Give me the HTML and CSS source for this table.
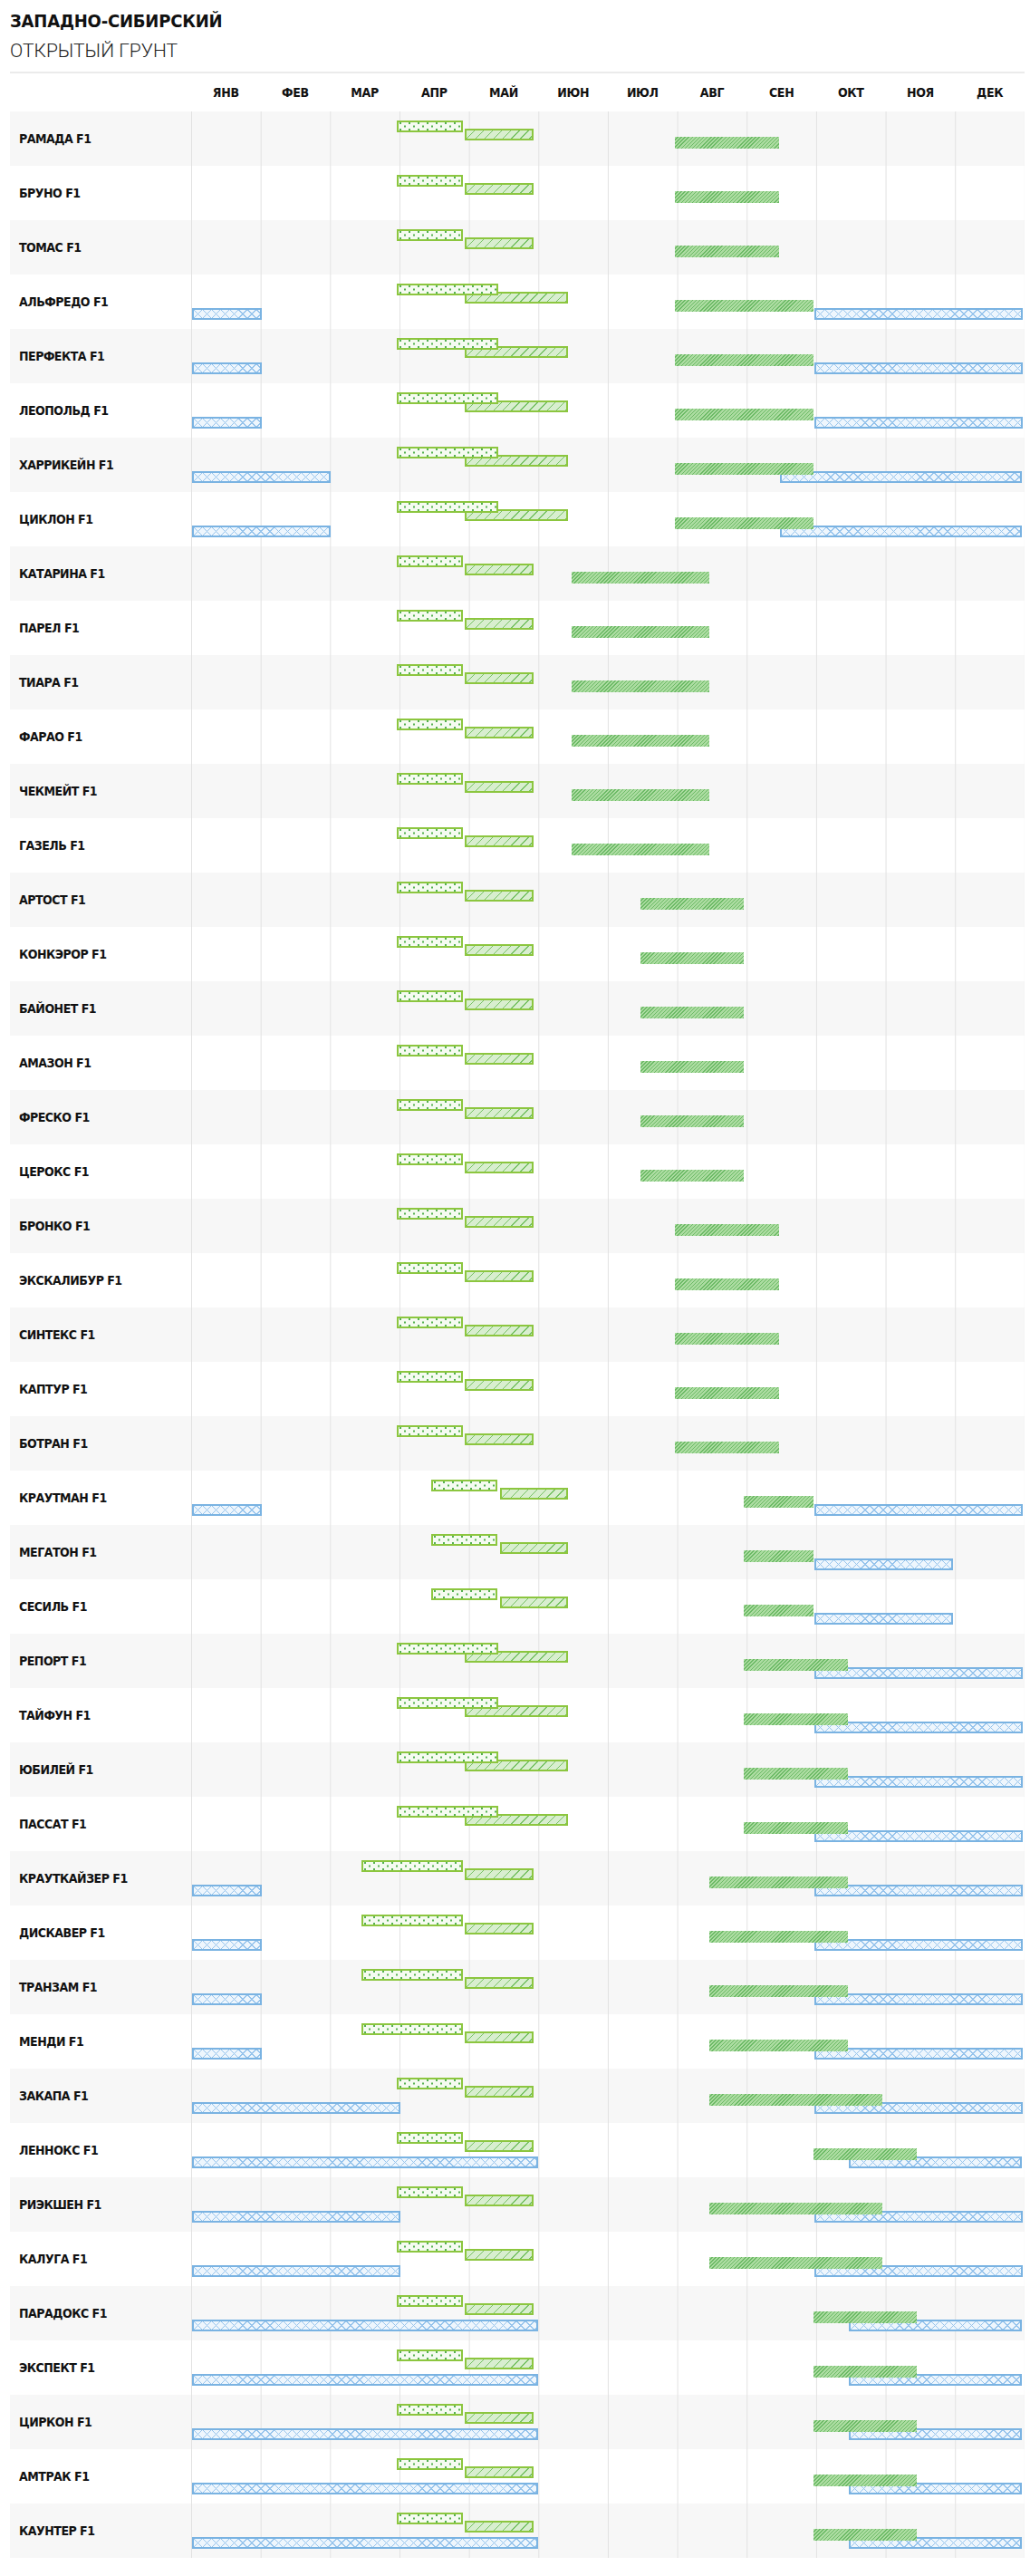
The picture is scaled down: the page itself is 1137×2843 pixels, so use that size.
FILE: index.html
```html
<!DOCTYPE html>
<html lang="ru">
<head>
<meta charset="utf-8">
<title>Западно-Сибирский — открытый грунт</title>
<link rel="stylesheet" href="styles.css">
</head>
<body>
<div class="page">
  <h1 class="title">ЗАПАДНО-СИБИРСКИЙ</h1>
  <h2 class="subtitle">ОТКРЫТЫЙ ГРУНТ</h2>
  <div class="chart">
    <div class="months">
      <div class="months-spacer"></div>
      <div class="month">ЯНВ</div><div class="month">ФЕВ</div><div class="month">МАР</div><div class="month">АПР</div>
      <div class="month">МАЙ</div><div class="month">ИЮН</div><div class="month">ИЮЛ</div><div class="month">АВГ</div>
      <div class="month">СЕН</div><div class="month">ОКТ</div><div class="month">НОЯ</div><div class="month">ДЕК</div>
    </div>

    <div class="row"><div class="name">РАМАДА F1</div><div class="track"><div class="bars"><i class="bar harv" style="--s:7;--e:8.5"></i><i class="bar hat" style="--s:4;--e:5"></i><i class="bar dot" style="--s:3;--e:4"></i></div></div></div>
    <div class="row"><div class="name">БРУНО F1</div><div class="track"><div class="bars"><i class="bar harv" style="--s:7;--e:8.5"></i><i class="bar hat" style="--s:4;--e:5"></i><i class="bar dot" style="--s:3;--e:4"></i></div></div></div>
    <div class="row"><div class="name">ТОМАС F1</div><div class="track"><div class="bars"><i class="bar harv" style="--s:7;--e:8.5"></i><i class="bar hat" style="--s:4;--e:5"></i><i class="bar dot" style="--s:3;--e:4"></i></div></div></div>
    <div class="row"><div class="name">АЛЬФРЕДО F1</div><div class="track"><div class="bars"><i class="bar blue" style="--s:0;--e:1"></i><i class="bar blue" style="--s:9;--e:12"></i><i class="bar harv" style="--s:7;--e:9"></i><i class="bar hat" style="--s:4;--e:5.5"></i><i class="bar dot" style="--s:3;--e:4.5"></i></div></div></div>
    <div class="row"><div class="name">ПЕРФЕКТА F1</div><div class="track"><div class="bars"><i class="bar blue" style="--s:0;--e:1"></i><i class="bar blue" style="--s:9;--e:12"></i><i class="bar harv" style="--s:7;--e:9"></i><i class="bar hat" style="--s:4;--e:5.5"></i><i class="bar dot" style="--s:3;--e:4.5"></i></div></div></div>
    <div class="row"><div class="name">ЛЕОПОЛЬД F1</div><div class="track"><div class="bars"><i class="bar blue" style="--s:0;--e:1"></i><i class="bar blue" style="--s:9;--e:12"></i><i class="bar harv" style="--s:7;--e:9"></i><i class="bar hat" style="--s:4;--e:5.5"></i><i class="bar dot" style="--s:3;--e:4.5"></i></div></div></div>
    <div class="row"><div class="name">ХАРРИКЕЙН F1</div><div class="track"><div class="bars"><i class="bar blue" style="--s:0;--e:2"></i><i class="bar blue" style="--s:8.5;--e:12"></i><i class="bar harv" style="--s:7;--e:9"></i><i class="bar hat" style="--s:4;--e:5.5"></i><i class="bar dot" style="--s:3;--e:4.5"></i></div></div></div>
    <div class="row"><div class="name">ЦИКЛОН F1</div><div class="track"><div class="bars"><i class="bar blue" style="--s:0;--e:2"></i><i class="bar blue" style="--s:8.5;--e:12"></i><i class="bar harv" style="--s:7;--e:9"></i><i class="bar hat" style="--s:4;--e:5.5"></i><i class="bar dot" style="--s:3;--e:4.5"></i></div></div></div>
    <div class="row"><div class="name">КАТАРИНА F1</div><div class="track"><div class="bars"><i class="bar harv" style="--s:5.5;--e:7.5"></i><i class="bar hat" style="--s:4;--e:5"></i><i class="bar dot" style="--s:3;--e:4"></i></div></div></div>
    <div class="row"><div class="name">ПАРЕЛ F1</div><div class="track"><div class="bars"><i class="bar harv" style="--s:5.5;--e:7.5"></i><i class="bar hat" style="--s:4;--e:5"></i><i class="bar dot" style="--s:3;--e:4"></i></div></div></div>
    <div class="row"><div class="name">ТИАРА F1</div><div class="track"><div class="bars"><i class="bar harv" style="--s:5.5;--e:7.5"></i><i class="bar hat" style="--s:4;--e:5"></i><i class="bar dot" style="--s:3;--e:4"></i></div></div></div>
    <div class="row"><div class="name">ФАРАО F1</div><div class="track"><div class="bars"><i class="bar harv" style="--s:5.5;--e:7.5"></i><i class="bar hat" style="--s:4;--e:5"></i><i class="bar dot" style="--s:3;--e:4"></i></div></div></div>
    <div class="row"><div class="name">ЧЕКМЕЙТ F1</div><div class="track"><div class="bars"><i class="bar harv" style="--s:5.5;--e:7.5"></i><i class="bar hat" style="--s:4;--e:5"></i><i class="bar dot" style="--s:3;--e:4"></i></div></div></div>
    <div class="row"><div class="name">ГАЗЕЛЬ F1</div><div class="track"><div class="bars"><i class="bar harv" style="--s:5.5;--e:7.5"></i><i class="bar hat" style="--s:4;--e:5"></i><i class="bar dot" style="--s:3;--e:4"></i></div></div></div>
    <div class="row"><div class="name">АРТОСТ F1</div><div class="track"><div class="bars"><i class="bar harv" style="--s:6.5;--e:8"></i><i class="bar hat" style="--s:4;--e:5"></i><i class="bar dot" style="--s:3;--e:4"></i></div></div></div>
    <div class="row"><div class="name">КОНКЭРОР F1</div><div class="track"><div class="bars"><i class="bar harv" style="--s:6.5;--e:8"></i><i class="bar hat" style="--s:4;--e:5"></i><i class="bar dot" style="--s:3;--e:4"></i></div></div></div>
    <div class="row"><div class="name">БАЙОНЕТ F1</div><div class="track"><div class="bars"><i class="bar harv" style="--s:6.5;--e:8"></i><i class="bar hat" style="--s:4;--e:5"></i><i class="bar dot" style="--s:3;--e:4"></i></div></div></div>
    <div class="row"><div class="name">АМАЗОН F1</div><div class="track"><div class="bars"><i class="bar harv" style="--s:6.5;--e:8"></i><i class="bar hat" style="--s:4;--e:5"></i><i class="bar dot" style="--s:3;--e:4"></i></div></div></div>
    <div class="row"><div class="name">ФРЕСКО F1</div><div class="track"><div class="bars"><i class="bar harv" style="--s:6.5;--e:8"></i><i class="bar hat" style="--s:4;--e:5"></i><i class="bar dot" style="--s:3;--e:4"></i></div></div></div>
    <div class="row"><div class="name">ЦЕРОКС F1</div><div class="track"><div class="bars"><i class="bar harv" style="--s:6.5;--e:8"></i><i class="bar hat" style="--s:4;--e:5"></i><i class="bar dot" style="--s:3;--e:4"></i></div></div></div>
    <div class="row"><div class="name">БРОНКО F1</div><div class="track"><div class="bars"><i class="bar harv" style="--s:7;--e:8.5"></i><i class="bar hat" style="--s:4;--e:5"></i><i class="bar dot" style="--s:3;--e:4"></i></div></div></div>
    <div class="row"><div class="name">ЭКСКАЛИБУР F1</div><div class="track"><div class="bars"><i class="bar harv" style="--s:7;--e:8.5"></i><i class="bar hat" style="--s:4;--e:5"></i><i class="bar dot" style="--s:3;--e:4"></i></div></div></div>
    <div class="row"><div class="name">СИНТЕКС F1</div><div class="track"><div class="bars"><i class="bar harv" style="--s:7;--e:8.5"></i><i class="bar hat" style="--s:4;--e:5"></i><i class="bar dot" style="--s:3;--e:4"></i></div></div></div>
    <div class="row"><div class="name">КАПТУР F1</div><div class="track"><div class="bars"><i class="bar harv" style="--s:7;--e:8.5"></i><i class="bar hat" style="--s:4;--e:5"></i><i class="bar dot" style="--s:3;--e:4"></i></div></div></div>
    <div class="row"><div class="name">БОТРАН F1</div><div class="track"><div class="bars"><i class="bar harv" style="--s:7;--e:8.5"></i><i class="bar hat" style="--s:4;--e:5"></i><i class="bar dot" style="--s:3;--e:4"></i></div></div></div>
    <div class="row"><div class="name">КРАУТМАН F1</div><div class="track"><div class="bars"><i class="bar blue" style="--s:0;--e:1"></i><i class="bar blue" style="--s:9;--e:12"></i><i class="bar harv" style="--s:8;--e:9"></i><i class="bar hat" style="--s:4.5;--e:5.5"></i><i class="bar dot" style="--s:3.5;--e:4.5"></i></div></div></div>
    <div class="row"><div class="name">МЕГАТОН F1</div><div class="track"><div class="bars"><i class="bar blue" style="--s:9;--e:11"></i><i class="bar harv" style="--s:8;--e:9"></i><i class="bar hat" style="--s:4.5;--e:5.5"></i><i class="bar dot" style="--s:3.5;--e:4.5"></i></div></div></div>
    <div class="row"><div class="name">СЕСИЛЬ F1</div><div class="track"><div class="bars"><i class="bar blue" style="--s:9;--e:11"></i><i class="bar harv" style="--s:8;--e:9"></i><i class="bar hat" style="--s:4.5;--e:5.5"></i><i class="bar dot" style="--s:3.5;--e:4.5"></i></div></div></div>
    <div class="row"><div class="name">РЕПОРТ F1</div><div class="track"><div class="bars"><i class="bar blue" style="--s:9;--e:12"></i><i class="bar harv" style="--s:8;--e:9.5"></i><i class="bar hat" style="--s:4;--e:5.5"></i><i class="bar dot" style="--s:3;--e:4.5"></i></div></div></div>
    <div class="row"><div class="name">ТАЙФУН F1</div><div class="track"><div class="bars"><i class="bar blue" style="--s:9;--e:12"></i><i class="bar harv" style="--s:8;--e:9.5"></i><i class="bar hat" style="--s:4;--e:5.5"></i><i class="bar dot" style="--s:3;--e:4.5"></i></div></div></div>
    <div class="row"><div class="name">ЮБИЛЕЙ F1</div><div class="track"><div class="bars"><i class="bar blue" style="--s:9;--e:12"></i><i class="bar harv" style="--s:8;--e:9.5"></i><i class="bar hat" style="--s:4;--e:5.5"></i><i class="bar dot" style="--s:3;--e:4.5"></i></div></div></div>
    <div class="row"><div class="name">ПАССАТ F1</div><div class="track"><div class="bars"><i class="bar blue" style="--s:9;--e:12"></i><i class="bar harv" style="--s:8;--e:9.5"></i><i class="bar hat" style="--s:4;--e:5.5"></i><i class="bar dot" style="--s:3;--e:4.5"></i></div></div></div>
    <div class="row"><div class="name">КРАУТКАЙЗЕР F1</div><div class="track"><div class="bars"><i class="bar blue" style="--s:0;--e:1"></i><i class="bar blue" style="--s:9;--e:12"></i><i class="bar harv" style="--s:7.5;--e:9.5"></i><i class="bar hat" style="--s:4;--e:5"></i><i class="bar dot" style="--s:2.5;--e:4"></i></div></div></div>
    <div class="row"><div class="name">ДИСКАВЕР F1</div><div class="track"><div class="bars"><i class="bar blue" style="--s:0;--e:1"></i><i class="bar blue" style="--s:9;--e:12"></i><i class="bar harv" style="--s:7.5;--e:9.5"></i><i class="bar hat" style="--s:4;--e:5"></i><i class="bar dot" style="--s:2.5;--e:4"></i></div></div></div>
    <div class="row"><div class="name">ТРАНЗАМ F1</div><div class="track"><div class="bars"><i class="bar blue" style="--s:0;--e:1"></i><i class="bar blue" style="--s:9;--e:12"></i><i class="bar harv" style="--s:7.5;--e:9.5"></i><i class="bar hat" style="--s:4;--e:5"></i><i class="bar dot" style="--s:2.5;--e:4"></i></div></div></div>
    <div class="row"><div class="name">МЕНДИ F1</div><div class="track"><div class="bars"><i class="bar blue" style="--s:0;--e:1"></i><i class="bar blue" style="--s:9;--e:12"></i><i class="bar harv" style="--s:7.5;--e:9.5"></i><i class="bar hat" style="--s:4;--e:5"></i><i class="bar dot" style="--s:2.5;--e:4"></i></div></div></div>
    <div class="row"><div class="name">ЗАКАПА F1</div><div class="track"><div class="bars"><i class="bar blue" style="--s:0;--e:3"></i><i class="bar blue" style="--s:9;--e:12"></i><i class="bar harv" style="--s:7.5;--e:10"></i><i class="bar hat" style="--s:4;--e:5"></i><i class="bar dot" style="--s:3;--e:4"></i></div></div></div>
    <div class="row"><div class="name">ЛЕННОКС F1</div><div class="track"><div class="bars"><i class="bar blue" style="--s:0;--e:5"></i><i class="bar blue" style="--s:9.5;--e:12"></i><i class="bar harv" style="--s:9;--e:10.5"></i><i class="bar hat" style="--s:4;--e:5"></i><i class="bar dot" style="--s:3;--e:4"></i></div></div></div>
    <div class="row"><div class="name">РИЭКШЕН F1</div><div class="track"><div class="bars"><i class="bar blue" style="--s:0;--e:3"></i><i class="bar blue" style="--s:9;--e:12"></i><i class="bar harv" style="--s:7.5;--e:10"></i><i class="bar hat" style="--s:4;--e:5"></i><i class="bar dot" style="--s:3;--e:4"></i></div></div></div>
    <div class="row"><div class="name">КАЛУГА F1</div><div class="track"><div class="bars"><i class="bar blue" style="--s:0;--e:3"></i><i class="bar blue" style="--s:9;--e:12"></i><i class="bar harv" style="--s:7.5;--e:10"></i><i class="bar hat" style="--s:4;--e:5"></i><i class="bar dot" style="--s:3;--e:4"></i></div></div></div>
    <div class="row"><div class="name">ПАРАДОКС F1</div><div class="track"><div class="bars"><i class="bar blue" style="--s:0;--e:5"></i><i class="bar blue" style="--s:9.5;--e:12"></i><i class="bar harv" style="--s:9;--e:10.5"></i><i class="bar hat" style="--s:4;--e:5"></i><i class="bar dot" style="--s:3;--e:4"></i></div></div></div>
    <div class="row"><div class="name">ЭКСПЕКТ F1</div><div class="track"><div class="bars"><i class="bar blue" style="--s:0;--e:5"></i><i class="bar blue" style="--s:9.5;--e:12"></i><i class="bar harv" style="--s:9;--e:10.5"></i><i class="bar hat" style="--s:4;--e:5"></i><i class="bar dot" style="--s:3;--e:4"></i></div></div></div>
    <div class="row"><div class="name">ЦИРКОН F1</div><div class="track"><div class="bars"><i class="bar blue" style="--s:0;--e:5"></i><i class="bar blue" style="--s:9.5;--e:12"></i><i class="bar harv" style="--s:9;--e:10.5"></i><i class="bar hat" style="--s:4;--e:5"></i><i class="bar dot" style="--s:3;--e:4"></i></div></div></div>
    <div class="row"><div class="name">АМТРАК F1</div><div class="track"><div class="bars"><i class="bar blue" style="--s:0;--e:5"></i><i class="bar blue" style="--s:9.5;--e:12"></i><i class="bar harv" style="--s:9;--e:10.5"></i><i class="bar hat" style="--s:4;--e:5"></i><i class="bar dot" style="--s:3;--e:4"></i></div></div></div>
    <div class="row"><div class="name">КАУНТЕР F1</div><div class="track"><div class="bars"><i class="bar blue" style="--s:0;--e:5"></i><i class="bar blue" style="--s:9.5;--e:12"></i><i class="bar harv" style="--s:9;--e:10.5"></i><i class="bar hat" style="--s:4;--e:5"></i><i class="bar dot" style="--s:3;--e:4"></i></div></div></div>
  </div>
</div>
</body>
</html>
```
FILE: styles.css
```css
html, body {
  margin: 0;
  padding: 0;
  background: #ffffff;
}

.page {
  margin-left: 11px;
  width: 1120px;
  font-family: "DejaVu Sans Condensed", "DejaVu Sans", sans-serif;
  font-stretch: condensed;
  color: #111111;
}

.title {
  margin: 0;
  padding-top: 11px;
  font-size: 20px;
  line-height: 24px;
  font-weight: bold;
  letter-spacing: -0.2px;
  color: #111111;
}

.subtitle {
  margin: 8px 0 0;
  font-family: Roboto, "Liberation Sans", sans-serif;
  font-stretch: normal;
  font-size: 21px;
  line-height: 26px;
  font-weight: 300;
  color: #222222;
}

.chart {
  margin-top: 10px;
  border-top: 2px solid #ebebeb;
}

.months {
  display: grid;
  grid-template-columns: 200px repeat(12, 1fr);
  height: 42px;
  align-items: center;
}

.month {
  text-align: center;
  font-size: 14px;
  font-weight: bold;
  letter-spacing: -0.3px;
  color: #111111;
}

.row {
  display: grid;
  grid-template-columns: 200px 1fr;
  height: 60px;
  background: #ffffff;
}

.row:nth-child(even) {
  background: #f7f7f7;
}

.name {
  display: flex;
  align-items: center;
  padding-left: 10px;
  font-size: 14px;
  font-weight: bold;
  letter-spacing: -0.5px;
  color: #111111;
}

.track {
  position: relative;
  background-image: linear-gradient(to right, #e2e2e2 1px, transparent 1px);
  background-size: calc(100% / 12) 100%;
}

.bars {
  position: absolute;
  top: 0;
  bottom: 0;
  left: 2px;
  right: 2px;
}

.bar {
  position: absolute;
  display: block;
  box-sizing: border-box;
  height: 13px;
  left: calc(var(--s) * 100% / 12 + var(--dx));
  width: calc((var(--e) - var(--s)) * 100% / 12 + var(--dw));
}

.dot {
  --dx: -4.5px;
  --dw: -2.5px;
  top: 10px;
  border: 2px solid #8cc63f;
  background-color: #f5fbf1;
  background-image:
    radial-gradient(circle at 1px 1px, #55b151 0.75px, transparent 0.8px),
    radial-gradient(circle at 1px 1px, #55b151 0.75px, transparent 0.8px);
  background-size: 10px 7px;
  background-position: 1px 0px, 6px 3.5px;
}

.hat {
  --dx: -5px;
  --dw: -0.5px;
  top: 19px;
  border: 2px solid #8cc63f;
  background-color: #d8eecf;
  background-image: repeating-linear-gradient(135deg, transparent 0 6px, #78c266 6px 7px);
}

.harv {
  --dx: -2.3px;
  --dw: 0px;
  top: 28px;
  background-color: #acdca1;
  background-image: repeating-linear-gradient(135deg, transparent 0 1.9px, #6cba66 1.9px 2.9px);
}

.blue {
  --dx: -1px;
  --dw: 0.5px;
  top: 37px;
  border: 2px solid #7ab3e2;
  background-color: #eef6fd;
  background-image:
    repeating-linear-gradient(45deg, transparent 0 6px, #97c4ec 6px 7px),
    repeating-linear-gradient(135deg, transparent 0 6px, #97c4ec 6px 7px);
}
```
